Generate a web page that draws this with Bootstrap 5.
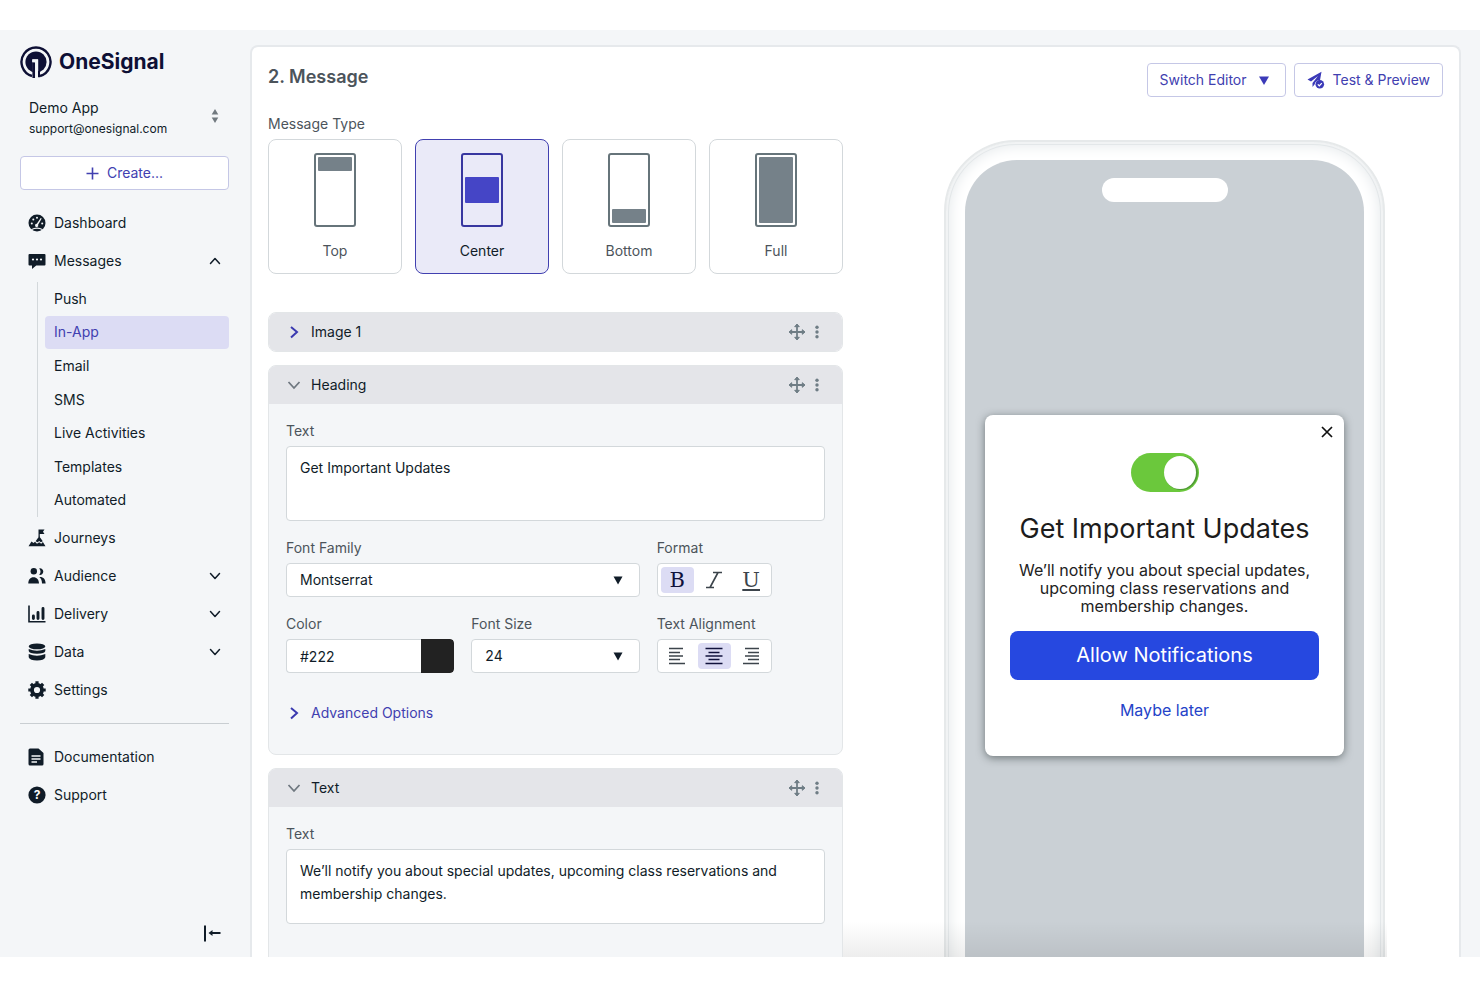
<!DOCTYPE html>
<html lang="en">
<head>
<meta charset="utf-8">
<meta name="viewport" content="width=device-width, initial-scale=1">
<title>OneSignal – In-App Message</title>
<link href="https://cdn.jsdelivr.net/npm/bootstrap@5.3.0/dist/css/bootstrap.min.css" rel="stylesheet">
<style>
:root{--ink:#101c28;--soft:#4c545b;--indigo:#4140b0;--tint:#dcdcf4;--line:#d3d8db;--surface:#f4f6f8;--steel:#6f7d85}
body{font-family:Inter,"Liberation Sans",sans-serif;font-size:14px;line-height:22px;color:var(--ink);background:#fff}
svg{display:block;flex:none}
.app-shell{height:100vh;padding:30px 0}
.app-frame{background:var(--surface);overflow:hidden}
/* sidebar */
.side{width:250px;flex:none;padding:16px 21px 12px 20px}
.brand{height:32px;font-size:21px;font-weight:700;color:#0e1035;gap:7px}
.account{height:44px;margin:18px 0 16px;padding:0 10px 0 9px;background:none;border:0;color:inherit;text-align:left}
.account small{font-size:12px;line-height:20px;display:block}
.btn-line{--bs-btn-color:var(--indigo);--bs-btn-bg:#fff;--bs-btn-border-color:#c5c7e6;--bs-btn-hover-color:var(--indigo);--bs-btn-hover-bg:#ededfa;--bs-btn-hover-border-color:#a9abdc;--bs-btn-font-size:14px;--bs-btn-line-height:22px;--bs-btn-padding-y:5px;--bs-btn-padding-x:12px;--bs-btn-border-radius:4px}
.side-link{height:34px;padding:0 8px;gap:8px;color:var(--ink);text-decoration:none;display:flex;align-items:center}
.side-link svg:first-child{width:18px;height:18px}
.side-nav{gap:4px;margin-top:16px}
.sub-nav{height:235px;margin-left:17px;padding-left:7px;border-left:1px solid var(--line)}
.sub-nav a{flex:1;display:flex;align-items:center;padding:0 9px;border-radius:4px;color:var(--ink);text-decoration:none}
.sub-nav a.active{background:var(--tint);color:var(--indigo)}
.side-rule{margin:16px 0;border-top:1px solid #c9ced2;opacity:1}
/* editor */
.sheet{margin:15px 19px 0 0;padding:16px 16px 0;background:#fff;border:2px solid #e6e9ec;border-bottom:0;border-radius:8px 8px 0 0;overflow:hidden}
.sheet h1{font-size:18px;line-height:28px;font-weight:600;color:var(--soft)}
.work{display:grid;grid-template-columns:575fr 557fr;column-gap:43px}
.form-label,.group-label{margin:0 0 4px;line-height:22px;color:var(--soft);font-size:14px;display:block}
.types{display:grid;grid-template-columns:repeat(4,1fr);gap:13px;margin-bottom:38px}
.type-card{height:135px;padding-top:13px;border:1px solid var(--line);border-radius:8px;color:var(--soft);display:flex;flex-direction:column;align-items:center;gap:13px;cursor:pointer}
.btn-check:checked+.type-card{background:#eaeaf8;border-color:var(--indigo);color:var(--ink)}
.panel{margin-bottom:13px;border:1px solid #e3e6e8;border-radius:8px;background:var(--surface);overflow:hidden}
.panel-top{height:38px;padding:0 22px 0 17px;background:#e4e5e9}
.panel-top button,.more{border:0;background:none;padding:0;color:var(--steel)}
.panel-top .toggler{color:var(--ink);gap:9px}
.panel-main{padding:16px 17px 30px}
.fields{display:grid;grid-template-columns:repeat(3,1fr);gap:16px 17px}
.span-2{grid-column:span 2}.span-3{grid-column:span 3}
.form-control,.form-select{height:34px;border-color:var(--line);border-radius:4px;font-size:14px;line-height:22px;padding:5px 13px;color:var(--ink);background-color:#fff}
textarea.form-control{height:75px;padding:9px 13px;line-height:23px;resize:none}
.form-select{background-image:url("data:image/svg+xml,%3csvg xmlns='http://www.w3.org/2000/svg' viewBox='0 0 10 9'%3e%3cpath fill='%23101c28' d='M0.5 0.5h9L5 8.5z'/%3e%3c/svg%3e");background-size:10px 9px;background-position:right 16px center}
.swatch{width:33px;height:34px;flex:none;padding:0;border:0;border-radius:0 4px 4px 0;-webkit-appearance:none;appearance:none;background:none}
.swatch::-webkit-color-swatch-wrapper{padding:0}
.swatch::-webkit-color-swatch{border:0;border-radius:0 4px 4px 0}
.tools{width:115px;height:34px;padding:3px;gap:4px;border:1px solid var(--line);border-radius:4px;background:#fff}
.tool{flex:1;display:flex;align-items:center;justify-content:center;border-radius:4px;color:#3c444b;cursor:pointer;font:21px/26px "DejaVu Serif",serif}
.btn-check:checked+.tool{background:var(--tint);color:#10123c}
.more{color:var(--indigo);gap:9px;margin-top:29px}
/* device preview */
.device{width:100%;max-width:441px;margin:43px auto 0;padding:18px 19px;border:2px solid #e6e9ea;border-radius:72px;background:#fff;box-shadow:inset 0 0 0 2px #f1f3f4,inset 0 0 0 3px #e3e7e9,inset 0 0 14px 4px #e6eaec}
.screen{height:850px;padding:0 20px;border-radius:52px;background:#cad0d5;position:relative}
.island{position:absolute;top:18px;left:50%;width:126px;height:24px;margin-left:-63px;border-radius:12px;background:#fff}
.popup{height:341px;padding:38px 25px 0;border-radius:8px;background:#fff;box-shadow:0 2px 8px rgba(20,30,30,.5);position:relative;color:#222;text-align:center;width:100%}
.popup h2{font-size:27px;line-height:34px;font-weight:400;margin:20px -10px 15px;white-space:nowrap;color:#1c1c1c}
.popup p{font-size:16px;line-height:18px;margin:0 0 16px}
.popup .close-x{position:absolute;top:11px;right:11px;padding:0;border:0;background:none}
.allow{display:block;width:100%;height:49px;border:0;border-radius:8px;background:#2648e0;color:#fff;font-size:20px}
.later{display:inline-block;margin-top:19px;color:#2443c8;text-decoration:none;font-size:16px}
.fade-edge{position:absolute;bottom:0;left:49%;right:6%;height:36px;background:linear-gradient(rgba(0,0,0,0),rgba(0,0,0,.07));pointer-events:none}
</style>
</head>
<body>
<svg width="0" height="0" class="position-absolute" aria-hidden="true">
  <symbol id="down" viewBox="0 0 12 12"><path d="M1.500 3.500 6 8.500l4.500-5" fill="none" stroke="currentColor" stroke-width="1.500" stroke-linecap="round" stroke-linejoin="round"/></symbol>
  <symbol id="move" viewBox="0 0 18 18"><path d="M9 2v14M2 9h14" stroke="currentColor" stroke-width="1.800"/><path d="M9 1 11.300 3.700H6.700zM9 17l2.300-2.700H6.700zM1 9l2.700-2.300v4.600zM17 9l-2.700-2.300v4.600z" fill="currentColor" stroke="currentColor" stroke-width="1" stroke-linejoin="round"/></symbol>
  <symbol id="dots" viewBox="0 0 4 14"><circle cx="2" cy="2.200" r="1.700"/><circle cx="2" cy="7" r="1.700"/><circle cx="2" cy="11.800" r="1.700"/></symbol>
</svg>
<div class="app-shell">
<div class="app-frame d-flex h-100">
  <aside class="side d-flex flex-column">
    <div class="brand d-flex align-items-center">
      <svg width="32" height="32" viewBox="0 0 32 32"><path d="M12 30A14.500 14.500 0 1 1 20 30" fill="none" stroke="#0e1035" stroke-width="2.400"/><circle cx="16" cy="16" r="10.600" fill="#0e1035"/><path d="M12.300 13.500h5.900V32h-5.400V16.300h-.5z" fill="#f4f6f8"/><path d="M14.400 16.200V32M17 14.800V32" fill="none" stroke="#0e1035" stroke-width="1.700"/><path d="M12.400 16.200h1.600V32h-1.600z" fill="#0e1035"/><path d="M12.300 13.300h5.700V32h-2.900V16.200h-2.800z" fill="#f4f6f8"/><path d="M19 25v6.200" stroke="#0e1035" stroke-width="2"/></svg>
      <span>OneSignal</span>
    </div>
    <button type="button" class="account d-flex align-items-center justify-content-between">
      <span>Demo App<small>support@onesignal.com</small></span>
      <svg class="mb-1" width="8" height="16" viewBox="0 0 8 16" fill="#727a80"><path d="M4 1 7.300 6.500H.7zM4 15 .7 9.500h6.600z"/></svg>
    </button>
    <button type="button" class="btn btn-line d-flex align-items-center justify-content-center gap-2">
      <svg width="13" height="13" viewBox="0 0 13 13"><path d="M6.500.5v12M.5 6.500h12" stroke="currentColor" stroke-width="1.600"/></svg>Create...
    </button>
    <nav class="side-nav d-flex flex-column">
      <a class="side-link" href="#"><svg viewBox="0 0 18 18"><circle cx="9" cy="9" r="8.500" fill="#101c28"/><g fill="#f4f6f8"><circle cx="3.800" cy="9.400" r="1"/><circle cx="5.300" cy="5.600" r="1"/><circle cx="9" cy="3.700" r="1"/><circle cx="14.200" cy="9.400" r="1"/><path d="m13.700 4.500-3.600 6.200a1.600 1.600 0 1 1-1.300-.9l3.900-5.700z"/><path d="M3 15.200q6-3.200 12 0l-.8.9q-5.200-2.500-10.400 0z"/></g></svg>Dashboard</a>
      <a class="side-link" href="#"><svg viewBox="0 0 18 18"><path d="M1.500 2h15a1 1 0 0 1 1 1v9.500a1 1 0 0 1-1 1H8.200L4 17v-3.500H1.500a1 1 0 0 1-1-1V3a1 1 0 0 1 1-1z" fill="#101c28"/><g fill="#f4f6f8"><circle cx="5" cy="7.500" r="1.100"/><circle cx="9" cy="7.500" r="1.100"/><circle cx="13" cy="7.500" r="1.100"/></g></svg>Messages<svg class="ms-auto" width="12" height="12" viewBox="0 0 12 12"><path d="M1.500 8.500 6 3.500l4.500 5" fill="none" stroke="currentColor" stroke-width="1.500" stroke-linecap="round" stroke-linejoin="round"/></svg></a>
      <div class="sub-nav d-flex flex-column">
        <a href="#">Push</a><a href="#" class="active">In-App</a><a href="#">Email</a><a href="#">SMS</a><a href="#">Live Activities</a><a href="#">Templates</a><a href="#">Automated</a>
      </div>
      <a class="side-link" href="#"><svg viewBox="0 0 18 18" fill="#101c28"><path d="M10.500.500h6l-1.500 2.300 1.500 2.300h-4.700v3h-1.300z"/><path d="M11.200 7.300 14.800 12.200 12.800 13.200l-1.600-1.200-1.600 1.200-2-1z"/><path d="M.5 17.200 3.500 12.500l2 1.500 1.500-1.200 2 2 2.200-1.600 2 1.500 1.700-1.600 2.600 4.100z"/></svg>Journeys</a>
      <a class="side-link" href="#"><svg viewBox="0 0 18 18" fill="#101c28"><circle cx="5.800" cy="4.300" r="3.200"/><path d="M.3 16.500c0-4 2-6.300 5.200-6.300s5.500 2.300 5.500 6.300zM11.200 1.400a3.300 3.300 0 1 1 0 6.400 5 5 0 0 0 0-6.400zM11.300 9.900c4.200-.3 6.300 2.400 6.300 6.600h-3.600c.1-2.700-.9-5.100-2.700-6.600z"/></svg>Audience<svg class="ms-auto" width="12" height="12"><use href="#down"/></svg></a>
      <a class="side-link" href="#"><svg viewBox="0 0 18 18" fill="none" stroke="#101c28"><path d="M1 .5V16.700h16.500" stroke-width="1.600"/><path d="M5.400 11v2.500M10 7.500v6M15 3.500v10" stroke-width="2.900" stroke-linecap="round"/></svg>Delivery<svg class="ms-auto" width="12" height="12"><use href="#down"/></svg></a>
      <a class="side-link" href="#"><svg viewBox="0 0 18 18" fill="#101c28"><ellipse cx="9" cy="3.400" rx="8.300" ry="2.900"/><path d="M.7 5.900q8.300 3.600 16.600 0V8q-.6 2.700-8.300 2.700T.7 8zM.7 11q8.300 3.300 16.600 0v3.200Q16 17.500 9 17.500T.7 14.200z"/></svg>Data<svg class="ms-auto" width="12" height="12"><use href="#down"/></svg></a>
      <a class="side-link" href="#"><svg viewBox="0 0 18 18"><circle cx="9" cy="9" r="5" fill="none" stroke="#101c28" stroke-width="3.800"/><path d="M9 .3v3M9 14.700v3M.3 9h3M14.700 9h3M2.850 2.850 5 5M13 13l2.150 2.150M2.850 15.150 5 13M13 5l2.150-2.150" stroke="#101c28" stroke-width="3.200"/></svg>Settings</a>
    </nav>
    <hr class="side-rule">
    <nav class="d-flex flex-column gap-1">
      <a class="side-link" href="#"><svg viewBox="0 0 18 18"><path d="M2 .5h8.500l5 4.500v11a1.500 1.500 0 0 1-1.500 1.500H2A1.500 1.500 0 0 1 .5 16V2A1.500 1.500 0 0 1 2 .5z" fill="#101c28"/><path d="M3.500 8h9M3.500 11h9M3.500 14H9" stroke="#f4f6f8" stroke-width="1.300"/></svg>Documentation</a>
      <a class="side-link" href="#"><svg viewBox="0 0 18 18"><circle cx="9" cy="9" r="8.600" fill="#101c28"/><text x="9" y="13.300" font-size="12" font-weight="700" text-anchor="middle" fill="#fff">?</text></svg>Support</a>
    </nav>
    <button type="button" class="btn p-0 border-0 mt-auto ms-auto me-2" aria-label="Collapse sidebar"><svg width="18" height="24" viewBox="0 0 18 24"><path d="M2 4.500v16M17.500 12H7" fill="none" stroke="#101c28" stroke-width="2"/><path d="m9.500 9-4 3 4 3z" fill="#101c28"/></svg></button>
  </aside>

  <main class="sheet flex-grow-1 position-relative">
    <header class="d-flex justify-content-between align-items-start">
      <h1 class="mb-0">2. Message</h1>
      <div class="d-flex gap-2">
        <button type="button" class="btn btn-line d-flex align-items-center gap-2">Switch Editor <svg class="mx-1" width="10" height="9" viewBox="0 0 10 9"><path d="M0 .5h10L5 9z" fill="#3b3ab8"/></svg></button>
        <button type="button" class="btn btn-line d-flex align-items-center gap-2"><svg width="18" height="18" viewBox="0 0 18 18"><path d="M.5 8.500 14.500.8 13 9.300a5 5 0 0 0-5.300 3.900L5.500 16v-4L11 5l-7 5.600z" fill="#3b3ab8"/><circle cx="12.800" cy="13.300" r="4.300" fill="#3b3ab8"/><path d="m10.800 13.400 1.500 1.400 2.500-2.700" fill="none" stroke="#fff" stroke-width="1.200"/></svg>Test &amp; Preview</button>
      </div>
    </header>
    <div class="work">
      <form>
        <span class="group-label mt-3" id="mt">Message Type</span>
        <div class="types" role="radiogroup" aria-labelledby="mt">
          <div><input class="btn-check" type="radio" name="type" id="t1"><label class="type-card" for="t1"><svg width="42" height="74" viewBox="0 0 42 74"><rect x="1" y="1" width="40" height="72" rx="2" fill="none" stroke="#66747a" stroke-width="2"/><rect x="4" y="4" width="34" height="14" rx="1" fill="#758189"/></svg>Top</label></div>
          <div><input class="btn-check" type="radio" name="type" id="t2" checked><label class="type-card" for="t2"><svg width="42" height="74" viewBox="0 0 42 74"><rect x="1" y="1" width="40" height="72" rx="2" fill="none" stroke="#3837a0" stroke-width="2"/><rect x="4" y="24" width="34" height="26" rx="1" fill="#4545c6"/></svg>Center</label></div>
          <div><input class="btn-check" type="radio" name="type" id="t3"><label class="type-card" for="t3"><svg width="42" height="74" viewBox="0 0 42 74"><rect x="1" y="1" width="40" height="72" rx="2" fill="none" stroke="#66747a" stroke-width="2"/><rect x="4" y="56" width="34" height="14" rx="1" fill="#758189"/></svg>Bottom</label></div>
          <div><input class="btn-check" type="radio" name="type" id="t4"><label class="type-card" for="t4"><svg width="42" height="74" viewBox="0 0 42 74"><rect x="1" y="1" width="40" height="72" rx="2" fill="none" stroke="#66747a" stroke-width="2"/><rect x="4" y="4" width="34" height="66" rx="1" fill="#758189"/></svg>Full</label></div>
        </div>

        <section class="panel">
          <div class="panel-top d-flex align-items-center">
            <button type="button" class="toggler d-flex align-items-center"><svg width="16" height="16" viewBox="0 0 16 16"><path d="m5 3 6 5-6 5.500" fill="none" stroke="#3b3ab0" stroke-width="2"/></svg>Image 1</button>
            <button type="button" class="ms-auto me-2" aria-label="Move"><svg width="18" height="18"><use href="#move"/></svg></button>
            <button type="button" aria-label="More"><svg width="6" height="14" fill="currentColor"><use href="#dots"/></svg></button>
          </div>
        </section>

        <section class="panel">
          <div class="panel-top d-flex align-items-center">
            <button type="button" class="toggler d-flex align-items-center"><svg width="16" height="16" viewBox="0 0 16 16"><path d="m2.500 5 5.500 6 5.500-6" fill="none" stroke="#6f7880" stroke-width="1.800"/></svg>Heading</button>
            <button type="button" class="ms-auto me-2" aria-label="Move"><svg width="18" height="18"><use href="#move"/></svg></button>
            <button type="button" aria-label="More"><svg width="6" height="14" fill="currentColor"><use href="#dots"/></svg></button>
          </div>
          <div class="panel-main">
            <div class="fields">
              <div class="span-3"><label class="form-label" for="h-text">Text</label><textarea class="form-control" id="h-text">Get Important Updates</textarea></div>
              <div class="span-2"><label class="form-label" for="family">Font Family</label><select class="form-select" id="family"><option>Montserrat</option></select></div>
              <div><span class="group-label" id="fmt">Format</span>
                <div class="tools d-flex" role="group" aria-labelledby="fmt">
                  <input class="btn-check" type="checkbox" id="fb" checked><label class="tool" for="fb" title="Bold">B</label>
                  <input class="btn-check" type="checkbox" id="fi"><label class="tool" for="fi" title="Italic"><svg width="18" height="18" viewBox="0 0 18 18" fill="none" stroke="currentColor" stroke-width="1.600"><path d="M8 1.500h9M1 16.500h8M13 1.500l-8 15"/></svg></label>
                  <input class="btn-check" type="checkbox" id="fu"><label class="tool" for="fu" title="Underline"><u>U</u></label>
                </div></div>
              <div><label class="form-label" for="color">Color</label><div class="d-flex"><input class="form-control rounded-end-0 border-end-0" id="color" value="#222"><input type="color" class="swatch" value="#222222" aria-label="Pick color"></div></div>
              <div><label class="form-label" for="size">Font Size</label><select class="form-select" id="size"><option>24</option></select></div>
              <div><span class="group-label" id="align">Text Alignment</span>
                <div class="tools d-flex" role="radiogroup" aria-labelledby="align">
                  <input class="btn-check" type="radio" name="al" id="al"><label class="tool" for="al" title="Left"><svg width="18" height="18" viewBox="0 0 18 18" stroke="currentColor" stroke-width="1.600"><path d="M1 1.500h14M1 5.500h11M1 9h14M1 12.500h11M1 16.500h16"/></svg></label>
                  <input class="btn-check" type="radio" name="al" id="ac" checked><label class="tool" for="ac" title="Center"><svg width="18" height="18" viewBox="0 0 18 18" stroke="currentColor" stroke-width="1.600"><path d="M.5 1.500h17M3.500 5.500h11M.5 9h17M3.500 12.500h11M.5 16.500h17"/></svg></label>
                  <input class="btn-check" type="radio" name="al" id="ar"><label class="tool" for="ar" title="Right"><svg width="18" height="18" viewBox="0 0 18 18" stroke="currentColor" stroke-width="1.600"><path d="M3 1.500h14M6 5.500h11M3 9h14M6 12.500h11M1 16.500h16"/></svg></label>
                </div></div>
            </div>
            <button type="button" class="more d-flex align-items-center"><svg width="16" height="16" viewBox="0 0 16 16"><path d="m5 3 6 5-6 5.500" fill="none" stroke="#3b3ab0" stroke-width="2"/></svg>Advanced Options</button>
          </div>
        </section>

        <section class="panel">
          <div class="panel-top d-flex align-items-center">
            <button type="button" class="toggler d-flex align-items-center"><svg width="16" height="16" viewBox="0 0 16 16"><path d="m2.500 5 5.500 6 5.500-6" fill="none" stroke="#6f7880" stroke-width="1.800"/></svg>Text</button>
            <button type="button" class="ms-auto me-2" aria-label="Move"><svg width="18" height="18"><use href="#move"/></svg></button>
            <button type="button" aria-label="More"><svg width="6" height="14" fill="currentColor"><use href="#dots"/></svg></button>
          </div>
          <div class="panel-main pb-5">
            <label class="form-label" for="b-text">Text</label>
            <textarea class="form-control" id="b-text">We’ll notify you about special updates, upcoming class reservations and membership changes.</textarea>
          </div>
        </section>
      </form>

      <div>
        <div class="device">
          <div class="screen d-flex align-items-center">
            <div class="island"></div>
            <div class="popup">
              <button type="button" class="close-x" aria-label="Close"><svg width="12" height="12" viewBox="0 0 12 12"><path d="m1 1 10 10M11 1 1 11" stroke="#111" stroke-width="1.700"/></svg></button>
              <svg class="mx-auto" width="68" height="39" viewBox="0 0 68 39"><rect width="68" height="39" rx="19.500" fill="#6bc83c"/><ellipse cx="50" cy="20" rx="16.800" ry="17" fill="#4f9a35"/><ellipse cx="49" cy="19.500" rx="16" ry="16.500" fill="#fff"/></svg>
              <h2>Get Important Updates</h2>
              <p>We’ll notify you about special updates, upcoming class reservations and membership changes.</p>
              <button type="button" class="allow">Allow Notifications</button>
              <a href="#" class="later">Maybe later</a>
            </div>
          </div>
        </div>
      </div>
    </div>
    <div class="fade-edge"></div>
  </main>
</div>
</div>
<script src="https://cdn.jsdelivr.net/npm/bootstrap@5.3.0/dist/js/bootstrap.bundle.min.js"></script>
</body>
</html>
